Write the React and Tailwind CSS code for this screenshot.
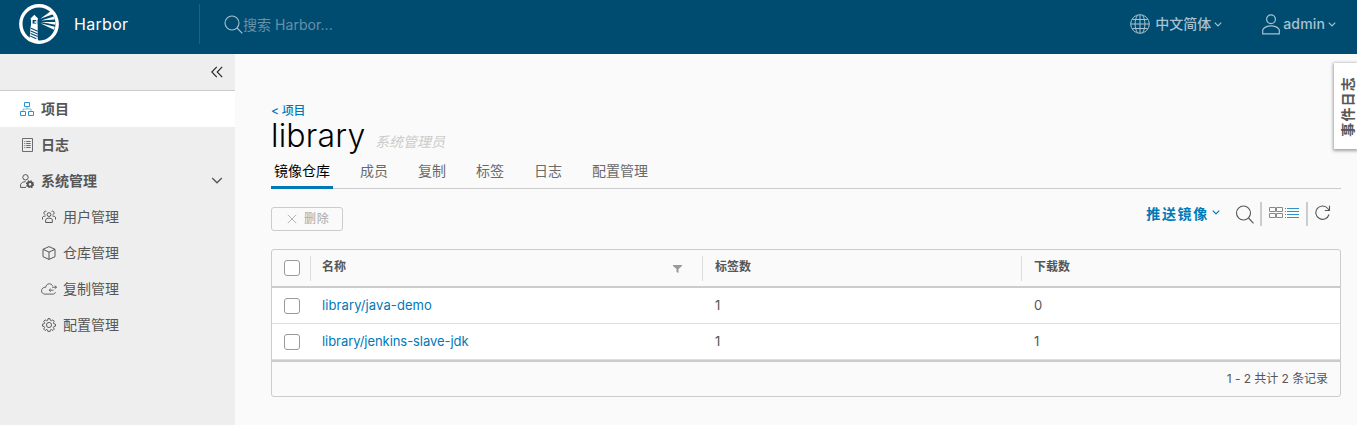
import React from "react";

const latin = "font-['Inter','Noto_Sans_CJK_SC',sans-serif]";

function Svg({ w = 16, h = 16, box = "0 0 36 36", sw = 2, className = "", children }) {
  return (
    <svg width={w} height={h} viewBox={box} fill="none" stroke="currentColor" strokeWidth={sw} className={"shrink-0 " + className}>
      {children}
    </svg>
  );
}

function Caret({ w = 8, h = 5, sw = 1.2, className = "" }) {
  return (
    <Svg w={w} h={h} box="0 0 8 5" sw={sw} className={className}>
      <path d="M.8.7 4 3.9 7.2.7" />
    </Svg>
  );
}

function Logo() {
  return (
    <svg width="40" height="40" viewBox="0 0 40 40" className="shrink-0">
      <circle cx="20" cy="20" r="18.2" fill="none" stroke="#fff" strokeWidth="3.4" />
      <path d="M11.6 15.500V14.500L15.300 10.800 19 14.500V15.500H18.500V20.500H18.700V35L20 38.500 10.500 36 11.600 23.500 12 20.500V15.500Z" fill="#fff" />
      <path d="M13.600 16h3.600v3.600h-3.600z" fill="#004b70" />
      <path d="M15.400 17.200h1.800v1.600h-1.800z" fill="#fff" />
      <path d="m12 24.300 6.700 2.900M11.800 26.900l6.900 3M11.500 29.500l7.200 3.100M11.300 32.100l6 2.600" stroke="#004b70" strokeWidth="1.100" />
      <path d="M21.300 14.800 32 7 34 10.200ZM22 16.600 35 12.600 35.800 15.600ZM22 18.100 36.400 18 36.200 20.800ZM21.300 19.300 35.800 22.800 35 25.800Z" fill="#fff" />
    </svg>
  );
}

const gearPath =
  "M15.6 3h4.8l1 4.3 2.3 1 3.8-2.3 3.4 3.4-2.3 3.8 1 2.3 4.2 1v4.8l-4.2 1-1 2.3 2.3 3.8-3.4 3.4-3.8-2.3-2.3 1-1 4.2h-4.8l-1-4.2-2.3-1-3.8 2.3-3.4-3.4 2.3-3.8-1-2.3-4.2-1v-4.8l4.2-1 1-2.3-2.3-3.8L8.500 6l3.800 2.300 2.300-1Z";

const icons = {
  project: (
    <Svg w={14} h={14} box="0 0 14 14" sw={1} className="text-[#2e93c8]">
      <path d="M4.500.5h5v4h-5zM.5 9.500h5v4h-5zM8.500 9.500h5v4h-5z" />
      <path d="M7 4.500V7M3 9.500V7h8v2.500" opacity=".6" />
    </Svg>
  ),
  log: (
    <Svg w={14} h={14} box="0 0 14 14" sw={1}>
      <path d="M2.500.5h10v13h-10zM4.300 3.500h1M6.200 3.500h4.500M4.300 5.500h1M6.200 5.500h4.500M4.300 7.500h1M6.200 7.500h4.500M4.300 9.500h1M6.200 9.500h4.500" opacity=".85" />
    </Svg>
  ),
  admin: (
    <Svg w={14} h={14} box="0 0 14 14" sw={1}>
      <circle cx="5.500" cy="3.300" r="2.700" />
      <path d="M6 13.400H.6v-3c.9-1.700 2.500-2.600 5-2.700" />
      <circle cx="10" cy="10.300" r="2.300" strokeWidth="1.900" />
      <circle cx="10" cy="10.300" r="3.500" strokeWidth="1.200" strokeDasharray="1.500 1.250" />
    </Svg>
  ),
  users: (
    <Svg w={14} h={14} box="0 0 14 14" sw={1}>
      <circle cx="7" cy="4.600" r="1.900" />
      <path d="M3.700 12.500V9.500C4.600 7.600 9.400 7.600 10.300 9.500v3ZM4.400 1.400C3.400.7 1.900 1.300 1.900 2.800c0 1 .6 1.700 1.500 1.900M9.600 1.400c1-.7 2.500-.1 2.500 1.400 0 1-.6 1.700-1.500 1.900M.5 9.500V7.200c.6-.8 1.600-1.200 3-1.200M13.500 9.500V7.200c-.6-.8-1.600-1.200-3-1.200" />
    </Svg>
  ),
  box: (
    <Svg w={14} h={14} box="0 0 14 14" sw={1}>
      <path d="M7 .6 13 3.300v7.400L7 13.400 1 10.700V3.300ZM1 3.300l6 2.800 6-2.800M7 6.100v7.300" />
    </Svg>
  ),
  cloud: (
    <Svg w={16} h={14} box="0 0 16 14" sw={0.9}>
      <path d="M11.500 3.800C10.900 2.300 9.600 1.700 8.100 1.800 6.300 1.900 5 3.300 4.800 5.200 2.300 5.200.5 6.700.5 8.800c0 2 1.500 3.300 3.400 3.300h8c1.300 0 2.200-.7 2.600-1.900M11 5.200h4.500M13.800 3.700l1.700 1.500-1.700 1.500M12.500 8.200H8.300M9.800 6.700 8.100 8.200l1.700 1.500" />
    </Svg>
  ),
  gear: (
    <Svg w={14} h={14} box="1 1.500 34 34" sw={2.300}>
      <path d={gearPath} />
      <circle cx="18" cy="18.500" r="6.200" />
    </Svg>
  ),
};

function NavItem({ icon, label, active, open }) {
  return (
    <div className={"flex h-9 items-center pl-5 pr-3 text-sm font-bold " + (active ? "bg-white" : "")}>
      <span className="flex w-[21px] items-center">{icons[icon]}</span>
      <span className="grow">{label}</span>
      {open && <Caret w={12} h={7.5} sw={0.9} />}
    </div>
  );
}

function SubItem({ icon, label }) {
  return (
    <div className="flex h-9 items-center pl-[41px] text-sm">
      <span className="flex w-[22px] items-center justify-start">
        <span className="flex w-4 justify-center">{icons[icon]}</span>
      </span>
      <span>{label}</span>
    </div>
  );
}

function Checkbox() {
  return <span className="block size-4 rounded-[3px] border border-[#9a9a9a] bg-white" />;
}

const cols = "grid grid-cols-[38px_392px_319px_1fr]";

function HeadCell({ children }) {
  return (
    <div className="flex pt-1.5">
      <span className="h-[25px] w-px bg-[#ddd]" />
      <div className="flex h-[22px] grow items-center pl-[12px] pr-5 text-xs font-bold leading-[22px]">{children}</div>
    </div>
  );
}

function Row({ name, tags, pulls, spacing }) {
  return (
    <div className={cols + " h-9 items-center border-b border-[#ddd] bg-white text-[13px]"}>
      <div className="pl-3">
        <Checkbox />
      </div>
      <div className={"pl-3 pt-px text-[#0079b8] " + spacing}>{name}</div>
      <div className="pl-[13px] pt-px">{tags}</div>
      <div className="pl-[13px] pt-px">{pulls}</div>
    </div>
  );
}

export default function App() {
  const tabs = ["镜像仓库", "成员", "复制", "标签", "日志", "配置管理"];
  return (
    <div className={latin + " relative flex h-[425px] w-[1357px] flex-col overflow-hidden bg-[#fafafa] text-[#565656]"}>
      <header className="h-[54px] shrink-0 bg-[#004b70] text-[#a8c2d0]">
        <div className="flex h-12 items-center pl-[19px] pr-5">
          <Logo />
          <span className="ml-[15px] w-[125px] text-base tracking-[0.3px] text-white">Harbor</span>
          <span className="h-10 w-px bg-[#245f80]" />
          <Svg w={19} h={19} box="0 0 19 19" sw={1.1} className="ml-6">
            <circle cx="8" cy="8" r="7" />
            <path d="m13 13 5.300 5.300" />
          </Svg>
          <span className="grow pt-0.5 text-sm tracking-[0.05px] text-[#6592aa]">搜索 Harbor...</span>
          <Svg w={20} h={20} box="0 0 20 20" sw={1}>
            <circle cx="10" cy="10" r="9.300" />
            <path d="M10 .7v18.600M.7 10h18.600M2.300 5.500h15.400M2.300 14.500h15.400M7.500 1.200C4.300 6 4.300 14 7.500 18.800M12.500 1.200C15.700 6 15.700 14 12.500 18.800" />
          </Svg>
          <span className="ml-[5px] text-sm font-medium">中文简体</span>
          <Caret className="ml-[3px]" />
          <Svg w={18} h={21} box="0 0 18 21" sw={1.2} className="ml-10">
            <circle cx="9" cy="5.200" r="4.400" />
            <path d="M.7 19.800v-4c1.600-2.500 4.600-3.900 8.300-3.900s6.700 1.400 8.300 3.900v4Z" />
          </Svg>
          <span className="ml-[3px] text-sm font-medium tracking-[0.15px]">admin</span>
          <Caret className="ml-[3px] mr-px" />
        </div>
      </header>

      <div className="flex grow">
        <nav className="w-[235px] shrink-0 bg-[#eee]">
          <div className="flex h-[37px] items-center justify-end border-b border-[#ccc] pr-3">
            <Svg w={12} h={12} box="0 0 12 12" sw={1.1} className="text-[#222]">
              <path d="M5.800.8.8 6l5 5.200M11.200.8 6.200 6l5 5.200" />
            </Svg>
          </div>
          <NavItem icon="project" label="项目" active />
          <NavItem icon="log" label="日志" />
          <NavItem icon="admin" label="系统管理" open />
          <SubItem icon="users" label="用户管理" />
          <SubItem icon="box" label="仓库管理" />
          <SubItem icon="cloud" label="复制管理" />
          <SubItem icon="gear" label="配置管理" />
        </nav>

        <main className="grow pl-9 pr-4 pt-12">
          <div className="h-[18px] text-xs font-medium leading-[18px] tracking-[-0.2px] text-[#0079b8]">&lt; 项目</div>
          <div className="flex h-8 items-baseline">
            <h1 className="w-[104px] whitespace-nowrap text-[32px] font-light leading-8 tracking-[0.2px] text-black">library</h1>
            <span className="text-sm italic leading-8 text-[#ccc]">系统管理员</span>
          </div>
          <div className="mt-[1px] flex h-9 gap-6 border-b border-[#ccc] text-sm text-[#6a6a6a]">
            {tabs.map((t, i) => (
              <span
                key={t}
                className={
                  "-mb-px flex h-9 items-center px-[3px] pt-0.5 " +
                  (i === 0 ? "border-b-[3px] border-[#0079b8] text-black" : "border-b-[3px] border-transparent")
                }
              >
                {t}
              </span>
            ))}
          </div>

          <div className="flex h-[60px] items-start pt-[13px]">
            <div className="mt-[5px] flex h-6 w-[72px] items-center rounded-[3px] border border-[#ccc] pl-[15px] text-xs font-medium tracking-[0.8px] text-[#b5b5b5]">
              <Svg w={10} h={10} box="0 0 10 10" sw={1} className="mr-[7px]">
                <path d="m.8.8 8.400 8.400M9.200.8.8 9.200" />
              </Svg>
              删除
            </div>
            <div className="ml-auto flex h-6 items-center pr-[10px]">
              <span className="text-sm font-bold tracking-[1.7px] text-[#0079b8]">推送镜像</span>
              <Caret className="mb-[3px] ml-[3px] text-[#0079b8]" />
              <Svg w={19} h={19} box="0 0 19 19" sw={1.1} className="ml-[15px]">
                <circle cx="8.500" cy="8" r="7" />
                <path d="m13.500 13 5 5.300" />
              </Svg>
              <span className="ml-1.5 h-6 w-0.5 bg-[#ccc]" />
              <Svg w={14} h={11} box="0 0 14 11" sw={1} className="mb-[3px] ml-[7px] text-[#888]">
                <path d="M.5.5h6v4h-6zM7.500.5h6v4h-6zM.5 6.500h6v4h-6zM7.500 6.500h6v4h-6z" />
              </Svg>
              <Svg w={14} h={11} box="0 0 14 11" sw={1} className="mb-[3px] ml-0.5 text-[#2e93c8]">
                <path d="M0 1.500h1M2 1.500h12M0 4.500h1M2 4.500h12M0 7.500h1M2 7.500h12M0 10.500h1M2 10.500h12" />
              </Svg>
              <span className="ml-[7px] h-6 w-0.5 bg-[#ccc]" />
              <Svg w={16} h={16} box="0 0 16 16" sw={1.1} className="mb-0.5 ml-[7px]">
                <path d="M14 9.500A6.700 6.700 0 1 1 12.800 3.500L14.500 5.500M14.500.8v4.700H9.800" />
              </Svg>
            </div>
          </div>

          <div className="h-[148px] overflow-hidden rounded-[3px] border border-[#ccc]">
            <div className={cols + " h-[38px] border-b-2 border-[#ccc]"}>
              <div className="pl-3 pt-[10px]">
                <Checkbox />
              </div>
              <HeadCell>
                <span className="-ml-px">名称</span>
                <svg width="9" height="8" viewBox="0 0 9 8" fill="#999" className="ml-auto mt-[3px]">
                  <path d="M0 0h9v1L5.500 4v4l-2-1V4L0 1Z" />
                </svg>
              </HeadCell>
              <HeadCell>标签数</HeadCell>
              <HeadCell>下载数</HeadCell>
            </div>
            <Row name="library/java-demo" tags="1" pulls="0" spacing="tracking-[0.1px]" />
            <Row name="library/jenkins-slave-jdk" tags="1" pulls="1" spacing="tracking-[-0.06px]" />
            <div className="flex h-9 items-center justify-end border-t-2 border-[#ccc] pb-px pr-3 text-xs tracking-[-0.05px]">1 - 2 共计 2 条记录</div>
          </div>
        </main>
      </div>

      <div className="absolute left-[1334px] top-[63px] flex h-[86px] w-[23px] items-center justify-center bg-white pl-[5px] shadow-[0_1px_3px_1px_rgba(0,0,0,0.35)]">
        <span className="rotate-180 text-sm font-bold leading-none tracking-[1.200px] [text-orientation:sideways] [writing-mode:vertical-rl]">事件日志</span>
      </div>
    </div>
  );
}
